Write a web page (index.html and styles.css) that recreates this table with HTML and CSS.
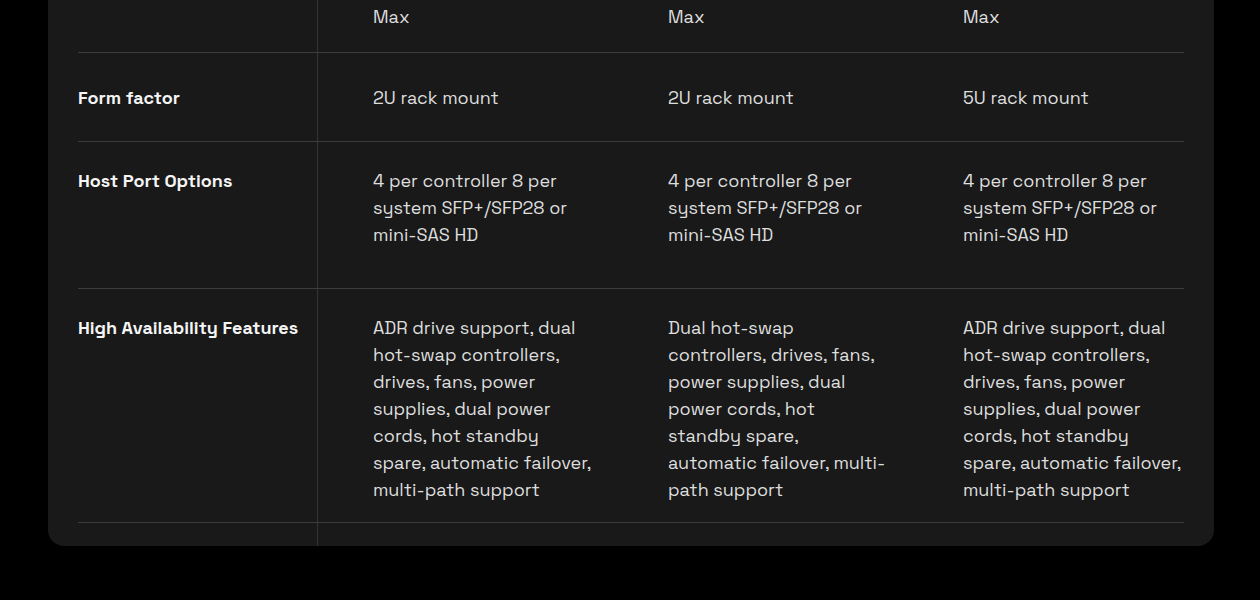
FILE: index.html
```html
<!DOCTYPE html>
<html lang="en">
<head>
<meta charset="utf-8">
<title>Specifications</title>
<link rel="stylesheet" href="styles.css">
</head>
<body>
<div class="card">
  <div class="row row-top">
    <div class="label"></div>
    <div class="cell">Max</div>
    <div class="cell">Max</div>
    <div class="cell">Max</div>
  </div>
  <div class="row row-form">
    <div class="label">Form factor</div>
    <div class="cell">2U rack mount</div>
    <div class="cell">2U rack mount</div>
    <div class="cell">5U rack mount</div>
  </div>
  <div class="row row-host">
    <div class="label">Host Port Options</div>
    <div class="cell">4 per controller 8 per system SFP+/SFP28 or mini-SAS HD</div>
    <div class="cell">4 per controller 8 per system SFP+/SFP28 or mini-SAS HD</div>
    <div class="cell">4 per controller 8 per system SFP+/SFP28 or mini-SAS HD</div>
  </div>
  <div class="row row-ha">
    <div class="label">High Availability Features</div>
    <div class="cell">ADR drive support, dual hot-swap controllers, drives, fans, power supplies, dual power cords, hot standby spare, automatic failover, multi-path support</div>
    <div class="cell">Dual hot-swap controllers, drives, fans, power supplies, dual power cords, hot standby spare, automatic failover, multi-path support</div>
    <div class="cell">ADR drive support, dual hot-swap controllers, drives, fans, power supplies, dual power cords, hot standby spare, automatic failover, multi-path support</div>
  </div>
  <div class="row row-tail">
    <div class="label"></div>
  </div>
</div>
</body>
</html>
```

FILE: styles.css
```css
html, body {
  margin: 0;
  padding: 0;
  background: #000;
}
body {
  padding: 0 46px 0 48px;
  height: 600px;
  overflow: hidden;
  font-family: "Space Grotesk", Inter, "DejaVu Sans", sans-serif;
  font-size: 18px;
  line-height: 27px;
  color: #dedede;
}
.card {
  background: #191919;
  border-radius: 0 0 16px 16px;
  padding: 0 30px;
  overflow: hidden;
}
.row {
  display: grid;
  grid-template-columns: 240px 295px 295px 295px;
  border-bottom: 1px solid #3c3c3c;
  box-sizing: border-box;
}
.label {
  border-right: 1px solid #333;
  font-weight: 600;
  color: #f5f5f5;
  padding-top: 25px;
}
.cell {
  padding: 25px 18px 0 55px;
}
.row-top { height: 53px; }
.row-top .cell { padding-top: 3px; }
.row-form { height: 89px; }
.row-form .label, .row-form .cell { padding-top: 31px; }
.row-host { height: 147px; }
.row-ha { height: 234px; }
.row-tail { height: 23px; border-bottom: none; }
```
